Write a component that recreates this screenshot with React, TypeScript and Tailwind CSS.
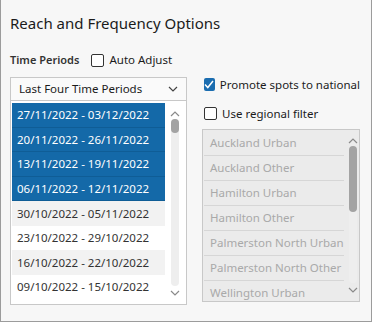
import { useState } from 'react';

const periods = [
  { label: '27/11/2022 - 03/12/2022', selected: true },
  { label: '20/11/2022 - 26/11/2022', selected: true },
  { label: '13/11/2022 - 19/11/2022', selected: true },
  { label: '06/11/2022 - 12/11/2022', selected: true },
  { label: '30/10/2022 - 05/11/2022', selected: false },
  { label: '23/10/2022 - 29/10/2022', selected: false },
  { label: '16/10/2022 - 22/10/2022', selected: false },
  { label: '09/10/2022 - 15/10/2022', selected: false },
];

const regions = [
  'Auckland Urban',
  'Auckland Other',
  'Hamilton Urban',
  'Hamilton Other',
  'Palmerston North Urban',
  'Palmerston North Other',
  'Wellington Urban',
];

const ChevronUp = () => (
  <svg width="10" height="6" viewBox="0 0 10 6" className="block">
    <path d="M1 5 L5 1 L9 5" fill="none" stroke="#8a8a8a" strokeWidth="1.2" />
  </svg>
);

const ChevronDown = ({ color = '#8a8a8a' }: { color?: string }) => (
  <svg width="10" height="6" viewBox="0 0 10 6" className="block">
    <path d="M1 1 L5 5 L9 1" fill="none" stroke={color} strokeWidth="1.2" />
  </svg>
);

const ScrollBar = ({ thumb }: { thumb: string }) => (
  <div className="w-[14px] h-full flex flex-col items-center pt-[8px] pb-[8px]">
    <ChevronUp />
    <div className="flex-1 w-[8px] mt-[2px] mb-[4px] rounded-full bg-[#eeeeee] flex flex-col">
      <div className={`${thumb} w-[8px] rounded-full bg-[#a3a3a3]`} />
    </div>
    <ChevronDown />
  </div>
);

const App = () => {
  const [autoAdjust, setAutoAdjust] = useState(false);
  const [promote, setPromote] = useState(true);
  const [regional, setRegional] = useState(false);

  return (
    <div className="w-[372px] h-[322px] bg-[#f7f7f7] border-l border-r border-b border-[#9c9c9c] text-[#1b1b1b] font-['Noto_Sans',sans-serif] overflow-hidden">
      <div className="px-[9px]">
        <p className="pt-[12px] h-[45px] text-[15px] leading-[22px] whitespace-nowrap">Reach and Frequency Options</p>

        <div className="flex items-center h-[22px] mt-[4px]">
          <span className="text-[11px] font-semibold text-[#333]">Time Periods</span>
          <button
            className="ml-[12px] flex items-center gap-[5px] text-[11.5px]"
            onClick={() => setAutoAdjust(!autoAdjust)}
          >
            <span className="w-[13px] h-[13px] rounded-[2px] border border-[#333] bg-white" />
            Auto Adjust
          </button>
        </div>

        <div className="flex mt-[6px]">
          <div className="w-[177px] flex flex-col">
            <div className="h-[24px] border border-[#c8c8c8] bg-[#fafafa] flex items-center justify-between pl-[8px] pr-[8px] text-[11.5px]">
              <span>Last Four Time Periods</span>
              <ChevronDown color="#444" />
            </div>
            <div className="h-[204px] border-l border-r border-b border-[#c8c8c8] bg-white flex pt-[2px] pl-[1px]">
              <div className="w-[153px] flex flex-col">
                {periods.map((p, i) => (
                  <div
                    key={p.label}
                    className={
                      p.selected
                        ? 'h-[24.5px] shrink-0 flex items-center pl-[5px] text-[11.5px] whitespace-nowrap text-white bg-[#1469a8] border-b border-[#0f5d96]'
                        : i % 2 === 0
                          ? 'h-[24.5px] shrink-0 flex items-center pl-[5px] text-[11.5px] whitespace-nowrap text-[#333] bg-[#f2f2f2]'
                          : 'h-[24.5px] shrink-0 flex items-center pl-[5px] text-[11.5px] whitespace-nowrap text-[#333] bg-white'
                    }
                  >
                    {p.label}
                  </div>
                ))}
              </div>
              <div className="ml-[3px]">
                <ScrollBar thumb="h-[14px]" />
              </div>
            </div>
          </div>

          <div className="ml-[15px] w-[158px] flex flex-col">
            <button
              className="h-[15px] flex items-center gap-[5px] pl-[2px] text-[11.5px] whitespace-nowrap"
              onClick={() => setPromote(!promote)}
            >
              <span className="w-[13px] h-[13px] rounded-[2px] bg-[#1b6db0] flex items-center justify-center">
                {promote && (
                  <svg width="10" height="9" viewBox="0 0 10 9">
                    <path d="M1 4.5 L3.8 7.5 L9 1" fill="none" stroke="#fff" strokeWidth="1.5" />
                  </svg>
                )}
              </span>
              Promote spots to national
            </button>
            <button
              className="h-[15px] mt-[14px] flex items-center gap-[5px] pl-[2px] text-[11.5px] whitespace-nowrap"
              onClick={() => setRegional(!regional)}
            >
              <span className="w-[13px] h-[13px] rounded-[2px] border border-[#333] bg-white" />
              Use regional filter
            </button>

            <div className="mt-[8px] h-[173px] border border-[#c8c8c8] bg-[#ebebeb] flex overflow-hidden">
              <div className="w-[141px] flex flex-col pt-[1px]">
                {regions.map((r) => (
                  <div
                    key={r}
                    className="h-[25px] shrink-0 flex items-center pl-[6px] ml-[1px] text-[11.5px] whitespace-nowrap text-[#a9a9a9] border-b border-[#d6d6d6]"
                  >
                    {r}
                  </div>
                ))}
              </div>
              <div className="ml-[2px]">
                <ScrollBar thumb="h-[66px]" />
              </div>
            </div>
          </div>
        </div>
      </div>
    </div>
  );
};

export default App;
